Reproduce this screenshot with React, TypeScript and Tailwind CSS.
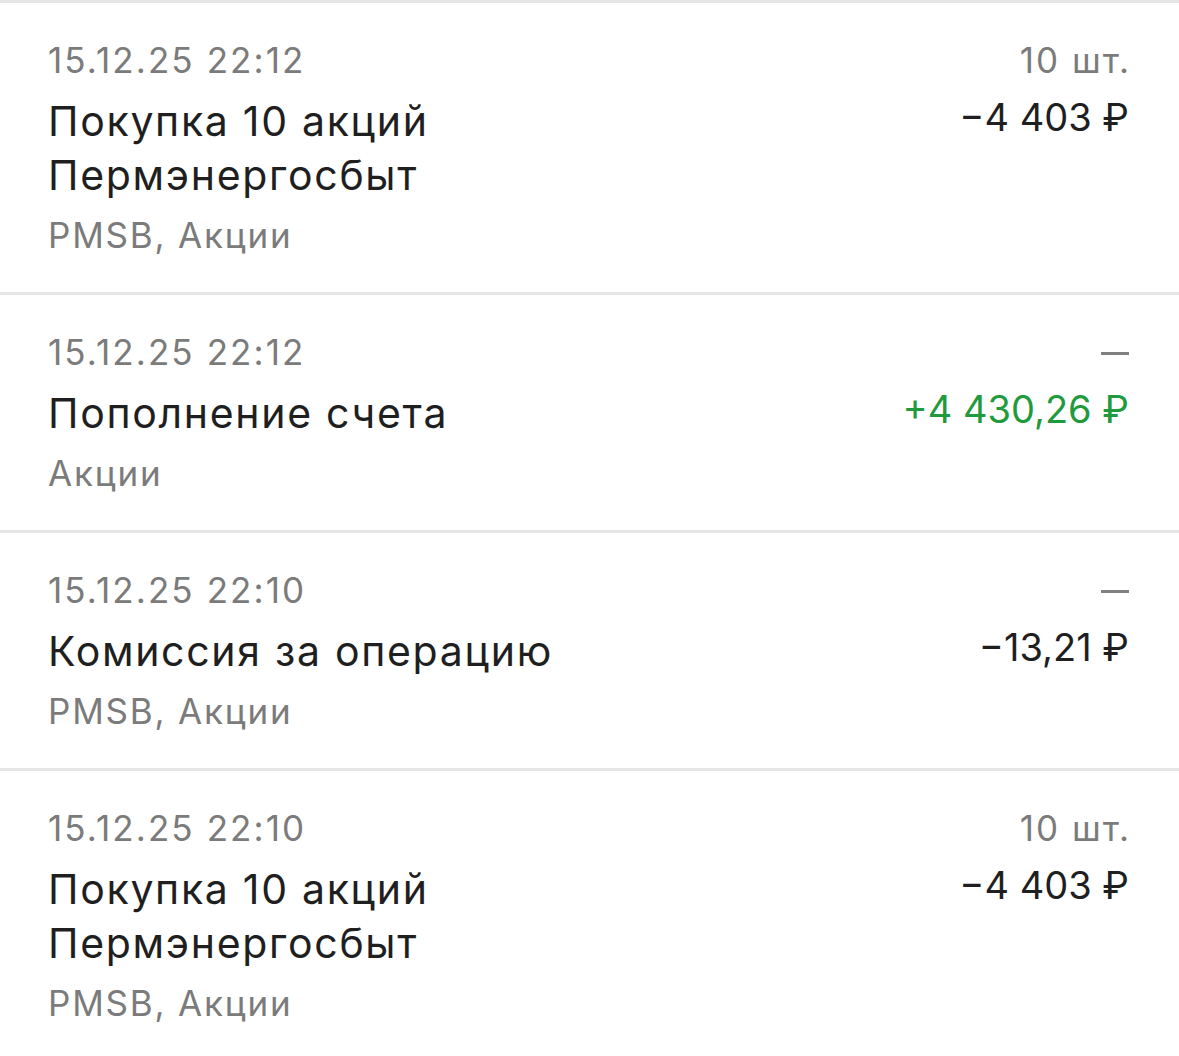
const font = { fontFamily: 'Inter, "Noto Sans", sans-serif' };

type Op = {
  date: string;
  title: string[];
  sub: string;
  qty: string;
  amount: string;
  positive?: boolean;
};

const ops: Op[] = [
  {
    date: '15.12.25 22:12',
    title: ['Покупка 10 акций', 'Пермэнергосбыт'],
    sub: 'PMSB, Акции',
    qty: '10 шт.',
    amount: '−4 403 ₽',
  },
  {
    date: '15.12.25 22:12',
    title: ['Пополнение счета'],
    sub: 'Акции',
    qty: '—',
    amount: '+4 430,26 ₽',
    positive: true,
  },
  {
    date: '15.12.25 22:10',
    title: ['Комиссия за операцию'],
    sub: 'PMSB, Акции',
    qty: '—',
    amount: '−13,21 ₽',
  },
  {
    date: '15.12.25 22:10',
    title: ['Покупка 10 акций', 'Пермэнергосбыт'],
    sub: 'PMSB, Акции',
    qty: '10 шт.',
    amount: '−4 403 ₽',
  },
];

function Row({ op }: { op: Op }) {
  const dash = op.qty === '—';
  return (
    <div className="border-t-[3px] border-[#e6e6e6] flex justify-between pl-[48px] pr-[50px] pt-[35px] pb-[35px]">
      {/* left side */}
      <div className="flex flex-col">
        <div className="text-[35px] leading-[44px] tracking-[2.1px] text-[#7b7b7b]">{op.date}</div>
        <div className="mt-[12px] text-[41px] leading-[54px] tracking-[1.7px] text-[#1f1f1f]">
          {op.title.map((t) => (
            <div key={t}>{t}</div>
          ))}
        </div>
        <div className="mt-[11px] text-[35px] leading-[44px] tracking-[1.8px] text-[#7b7b7b]">{op.sub}</div>
      </div>

      {/* right side */}
      <div className="flex flex-col items-end">
        {dash ? (
          <div className="h-[44px] flex items-center">
            <div className="w-[28px] h-[3px] bg-[#808080] mt-[2px]" />
          </div>
        ) : (
          <div className="text-[35px] leading-[44px] tracking-[2px] text-[#7b7b7b] -mr-[2px]">{op.qty}</div>
        )}
        <div
          className={`mt-[8px] text-[38px] leading-[54px] ${
            op.positive ? 'text-[#1f9a3c]' : 'text-[#1f1f1f]'
          }`}
        >
          {op.amount}
        </div>
      </div>
    </div>
  );
}

export default function App() {
  return (
    <div className="w-[1179px] h-[1056px] bg-white overflow-hidden" style={font}>
      {ops.map((op, i) => (
        <Row key={i} op={op} />
      ))}
    </div>
  );
}
